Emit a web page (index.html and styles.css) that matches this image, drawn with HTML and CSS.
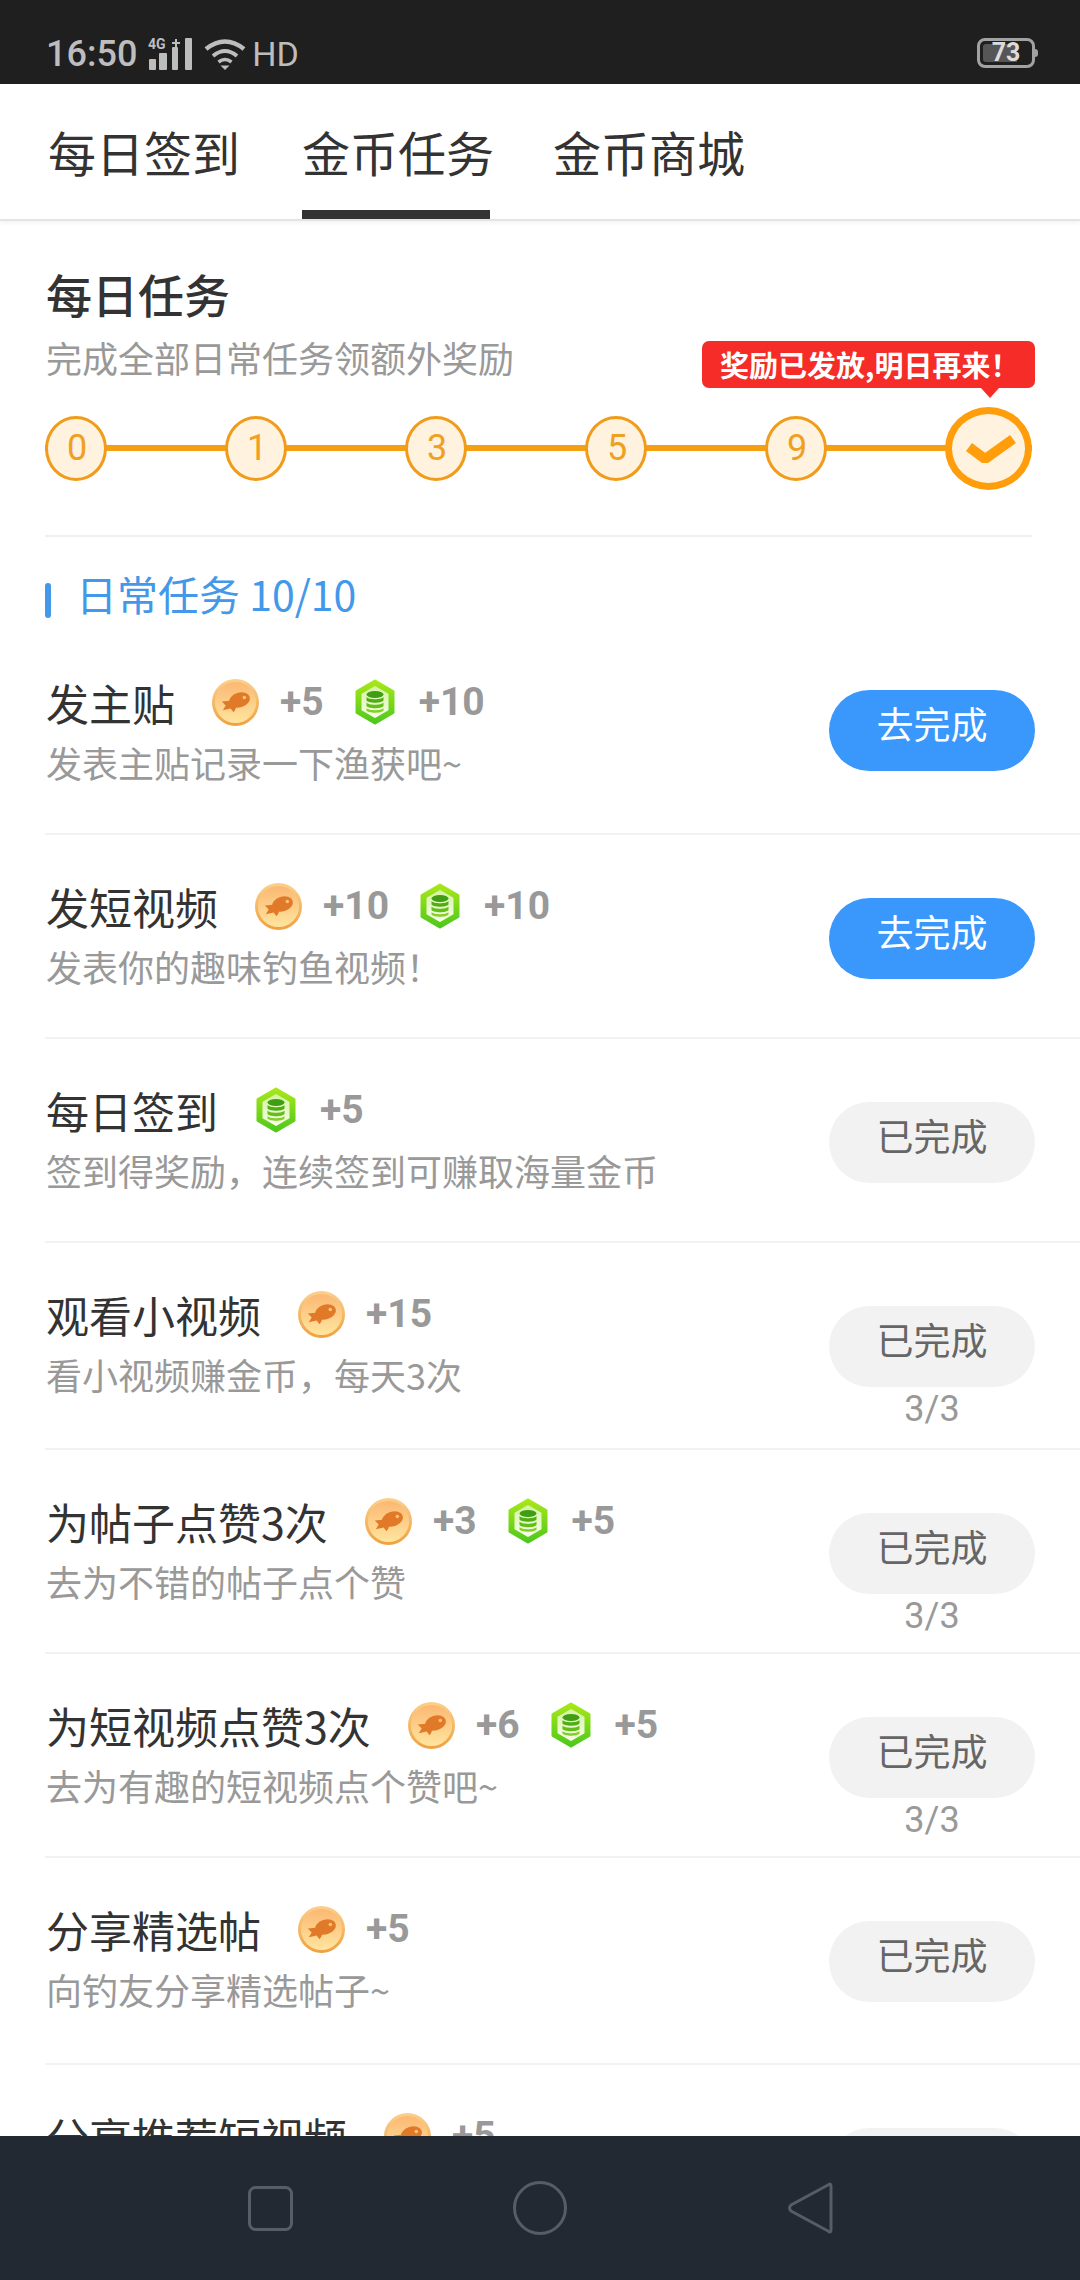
FILE: index.html
```html
<!DOCTYPE html>
<html lang="zh-CN">
<head>
    <meta charset="UTF-8">
    <title>金币任务</title>
    <link rel="stylesheet" href="styles.css">
</head>
<body>
    <svg class="defs" width="0" height="0">
        <defs>
            <linearGradient id="coin-fill" x1="0" y1="0" x2="0" y2="1">
                <stop offset="0" stop-color="#fbb873"/>
                <stop offset="1" stop-color="#ffe59e"/>
            </linearGradient>
            <linearGradient id="coin-ring" x1="0" y1="0" x2="0" y2="1">
                <stop offset="0" stop-color="#fbd08c"/>
                <stop offset="1" stop-color="#f0a040"/>
            </linearGradient>
            <linearGradient id="hex-fill" x1="0" y1="0" x2="0" y2="1">
                <stop offset="0" stop-color="#a8e818"/>
                <stop offset="1" stop-color="#4ec81c"/>
            </linearGradient>
            <linearGradient id="hex-inner" x1="0" y1="0" x2="0" y2="1">
                <stop offset="0" stop-color="#d6f3a4"/>
                <stop offset="1" stop-color="#f6fdea"/>
            </linearGradient>
            <symbol id="coin" viewBox="0 0 48 48">
                <circle cx="24" cy="24" r="24" fill="url(#coin-ring)"/>
                <circle cx="24" cy="24" r="21" fill="url(#coin-fill)"/>
                <ellipse cx="28" cy="21.500" rx="11" ry="7.500" transform="rotate(-18 28 21.500)" fill="#e07a28"/>
                <path d="M21 22l-11 1 4 4-3 5 8-2 3 4 2-3 2-7z" fill="#e07a28"/>
                <circle cx="33" cy="19" r="1.800" fill="#fbc27c"/>
            </symbol>
            <symbol id="hex" viewBox="0 0 42 46">
                <path d="M21 2l18 10.500v21L21 44 3 33.500v-21z" fill="url(#hex-fill)" stroke="url(#hex-fill)" stroke-width="3" stroke-linejoin="round"/>
                <path d="M21 8l12.500 7.300v15.400L21 38 8.500 30.700V15.300z" fill="url(#hex-inner)" stroke="url(#hex-inner)" stroke-width="2" stroke-linejoin="round"/>
                <ellipse cx="21" cy="15.500" rx="8.500" ry="3.500" fill="#3f9e12"/>
                <path d="M12.500 18c2 3 15 3 17 0v3.500c-2 3-15 3-17 0z" fill="#4fae14"/>
                <path d="M12.500 23.500c2 3 15 3 17 0V27c-2 3-15 3-17 0z" fill="#62be18"/>
                <path d="M12.500 29c2 3 15 3 17 0v2.500c-2 3-15 3-17 0z" fill="#82d022"/>
            </symbol>
        </defs>
    </svg>

    <header class="status-bar">
        <div class="status-left">
            <span class="clock">16:50</span>
            <svg class="signal" width="45" height="32" viewBox="0 0 45 32">
                <text x="0" y="11" class="net">4G</text>
                <path d="M24 4h3V1h2v3h3v2h-3v4h-2V6h-3z" fill="#bdbdbd"/>
                <rect x="1" y="21" width="7" height="11" rx="1" fill="#bdbdbd"/>
                <rect x="11" y="15" width="8" height="17" rx="1" fill="#bdbdbd"/>
                <rect x="24" y="9" width="6" height="23" rx="1" fill="#bdbdbd"/>
                <rect x="37" y="0" width="7" height="32" rx="1" fill="#bdbdbd"/>
            </svg>
            <svg class="wifi" width="42" height="32" viewBox="0 0 42 32">
                <path d="M2 11Q21 -4 40 11" fill="none" stroke="#bdbdbd" stroke-width="4.500"/>
                <path d="M9 18Q21 8 33 18" fill="none" stroke="#bdbdbd" stroke-width="4"/>
                <path d="M14.500 24Q21 19 27.500 24" fill="none" stroke="#bdbdbd" stroke-width="3.500"/>
                <path d="M16.500 27.500h9L21 32z" fill="#bdbdbd"/>
            </svg>
            <span class="hd">HD</span>
        </div>
        <div class="battery"><span class="battery-level">73</span></div>
    </header>

    <nav class="tabs">
        <a class="tab">每日签到</a>
        <a class="tab tab-active">金币任务</a>
        <a class="tab">金币商城</a>
    </nav>

    <main class="content">
        <section class="daily">
            <h1 class="daily-title">每日任务</h1>
            <p class="daily-sub">完成全部日常任务领额外奖励</p>
            <div class="steps">
                <span class="step">0</span>
                <span class="step">1</span>
                <span class="step">3</span>
                <span class="step">5</span>
                <span class="step">9</span>
                <span class="step step-done">
                    <span class="tip">奖励已发放,明日再来！</span>
                    <svg width="54" height="30" viewBox="0 0 54 30">
                        <path d="M7 14l16 12L51 6" fill="none" stroke="#ff9d0a" stroke-width="10" stroke-linejoin="round"/>
                    </svg>
                </span>
            </div>
        </section>

        <h2 class="group-title">日常任务 10/10</h2>

        <ul class="tasks">
            <li class="task">
                <div class="task-info">
                    <div class="task-head">
                        <span class="task-name">发主贴</span>
                        <svg class="coin"><use href="#coin"/></svg><b class="reward">+5</b>
                        <svg class="hex"><use href="#hex"/></svg><b class="reward">+10</b>
                    </div>
                    <p class="task-desc">发表主贴记录一下渔获吧~</p>
                </div>
                <div class="task-side"><span class="btn btn-go">去完成</span></div>
            </li>
            <li class="task">
                <div class="task-info">
                    <div class="task-head">
                        <span class="task-name">发短视频</span>
                        <svg class="coin"><use href="#coin"/></svg><b class="reward">+10</b>
                        <svg class="hex"><use href="#hex"/></svg><b class="reward">+10</b>
                    </div>
                    <p class="task-desc">发表你的趣味钓鱼视频！</p>
                </div>
                <div class="task-side"><span class="btn btn-go">去完成</span></div>
            </li>
            <li class="task">
                <div class="task-info">
                    <div class="task-head">
                        <span class="task-name">每日签到</span>
                        <svg class="hex"><use href="#hex"/></svg><b class="reward">+5</b>
                    </div>
                    <p class="task-desc">签到得奖励，连续签到可赚取海量金币</p>
                </div>
                <div class="task-side"><span class="btn">已完成</span></div>
            </li>
            <li class="task task-tall">
                <div class="task-info">
                    <div class="task-head">
                        <span class="task-name">观看小视频</span>
                        <svg class="coin"><use href="#coin"/></svg><b class="reward">+15</b>
                    </div>
                    <p class="task-desc">看小视频赚金币，每天3次</p>
                </div>
                <div class="task-side"><span class="btn">已完成</span><span class="count">3/3</span></div>
            </li>
            <li class="task">
                <div class="task-info">
                    <div class="task-head">
                        <span class="task-name">为帖子点赞3次</span>
                        <svg class="coin"><use href="#coin"/></svg><b class="reward">+3</b>
                        <svg class="hex"><use href="#hex"/></svg><b class="reward">+5</b>
                    </div>
                    <p class="task-desc">去为不错的帖子点个赞</p>
                </div>
                <div class="task-side"><span class="btn">已完成</span><span class="count">3/3</span></div>
            </li>
            <li class="task">
                <div class="task-info">
                    <div class="task-head">
                        <span class="task-name">为短视频点赞3次</span>
                        <svg class="coin"><use href="#coin"/></svg><b class="reward">+6</b>
                        <svg class="hex"><use href="#hex"/></svg><b class="reward">+5</b>
                    </div>
                    <p class="task-desc">去为有趣的短视频点个赞吧~</p>
                </div>
                <div class="task-side"><span class="btn">已完成</span><span class="count">3/3</span></div>
            </li>
            <li class="task task-tall">
                <div class="task-info">
                    <div class="task-head">
                        <span class="task-name">分享精选帖</span>
                        <svg class="coin"><use href="#coin"/></svg><b class="reward">+5</b>
                    </div>
                    <p class="task-desc">向钓友分享精选帖子~</p>
                </div>
                <div class="task-side"><span class="btn">已完成</span></div>
            </li>
            <li class="task">
                <div class="task-info">
                    <div class="task-head">
                        <span class="task-name">分享推荐短视频</span>
                        <svg class="coin"><use href="#coin"/></svg><b class="reward">+5</b>
                    </div>
                </div>
                <div class="task-side"><span class="btn">已完成</span></div>
            </li>
        </ul>
    </main>

    <footer class="nav-bar">
        <svg width="45" height="45" viewBox="0 0 45 45">
            <rect x="1.500" y="1.500" width="42" height="42" rx="6" fill="none" stroke="#565d68" stroke-width="3"/>
        </svg>
        <svg width="54" height="54" viewBox="0 0 54 54">
            <circle cx="27" cy="27" r="25.500" fill="none" stroke="#565d68" stroke-width="3"/>
        </svg>
        <svg width="46" height="52" viewBox="0 0 46 52">
            <path d="M41 3c2-2 3-1 3 1v44c0 2-1 3-3 1L4 29c-2-2-2-4 0-6z" fill="none" stroke="#565d68" stroke-width="3" stroke-linejoin="round"/>
        </svg>
    </footer>
</body>
</html>
```

FILE: styles.css
```css
* {
    box-sizing: border-box;
}

html, body {
    margin: 0;
    padding: 0;
}

body {
    width: 1080px;
    height: 2280px;
    display: flex;
    flex-direction: column;
    overflow: hidden;
    background: #fff;
    color: #333;
    font-family: "Noto Sans CJK SC", Roboto, sans-serif;
}

.defs {
    position: absolute;
}

/* Status bar */
.status-bar {
    flex: 0 0 84px;
    display: flex;
    justify-content: space-between;
    align-items: flex-end;
    padding: 0 45px 9px 46px;
    background: #1f1f1f;
    color: #bdbdbd;
}

.status-left {
    display: flex;
    align-items: center;
}

.clock, .hd {
    font-family: Roboto, sans-serif;
    line-height: 42px;
}

.clock {
    font-size: 36px;
    font-weight: 500;
}

.hd {
    font-size: 34px;
}

.signal {
    margin: 0 11px 0 11px;
}

.wifi {
    margin-right: 6px;
}

.net {
    font-family: Roboto, sans-serif;
    font-size: 14px;
    font-weight: 700;
    fill: #bdbdbd;
}

.battery {
    position: relative;
    width: 58px;
    height: 30px;
    margin-bottom: 7px;
    border: 3px solid #a2a2a2;
    border-radius: 8px;
    padding: 3px;
    display: flex;
}

.battery::after {
    content: "";
    position: absolute;
    right: -6px;
    top: 8px;
    width: 3px;
    height: 8px;
    border-radius: 0 3px 3px 0;
    background: #a2a2a2;
}

.battery-level {
    flex: 1;
    background: linear-gradient(to right, #565656 73%, transparent 73%);
    border-radius: 3px;
    color: #dcdcdc;
    font-family: Roboto, sans-serif;
    font-size: 25px;
    font-weight: 700;
    line-height: 18px;
    text-align: center;
}

/* Tabs */
.tabs {
    flex: 0 0 137px;
    display: flex;
    gap: 66px;
    padding-left: 48px;
    background: #fff;
    border-bottom: 2px solid #e4e4e4;
    box-shadow: 0 2px 4px rgba(0, 0, 0, 0.05);
}

.tab {
    width: 188px;
    height: 135px;
    padding-top: 34px;
    font-size: 48px;
    line-height: 66px;
    white-space: nowrap;
    color: #333;
}

.tab-active {
    margin-right: -3px;
    border-bottom: 9px solid #333;
}

/* Daily progress */
.content {
    flex: 1;
    min-height: 0;
    overflow: hidden;
}

.daily {
    margin: 0 48px 0 45px;
    height: 316px;
    padding-top: 42px;
    border-bottom: 2px solid #f0f0f0;
}

.daily-title {
    margin: 0 0 0 1px;
    font-size: 46px;
    font-weight: 500;
    line-height: 60px;
    color: #333;
}

.daily-sub {
    margin: 9px 0 0 1px;
    font-size: 36px;
    line-height: 50px;
    color: #999;
}

.steps {
    display: flex;
    align-items: center;
    justify-content: space-between;
    margin-top: 22px;
    height: 88px;
    background: linear-gradient(#f5a012, #f5a012) center / 100% 6px no-repeat;
}

.step {
    position: relative;
    width: 62px;
    height: 65px;
    padding-left: 2px;
    display: flex;
    align-items: center;
    justify-content: center;
    border: 3px solid #f09c1a;
    border-radius: 50%;
    background: #fff2df;
    color: #f0a020;
    font-family: Roboto, sans-serif;
    font-size: 36px;
}

.step-done {
    flex: 0 0 87px;
    height: 83px;
    padding-left: 0;
    border: 7px solid #ff9d0a;
}

.tip {
    position: absolute;
    top: -73px;
    right: -10px;
    width: 333px;
    height: 47px;
    padding-left: 18px;
    border-radius: 7px;
    background: #f52c27;
    color: #fff;
    font-family: "Noto Sans CJK SC", sans-serif;
    font-size: 29px;
    font-weight: 700;
    line-height: 46px;
    white-space: nowrap;
}

.tip::after {
    content: "";
    position: absolute;
    right: 36px;
    bottom: -10px;
    border: 9px solid transparent;
    border-bottom: 0;
    border-top: 10px solid #f52c27;
}

/* Task list */
.group-title {
    position: relative;
    margin: 30px 0 12px;
    padding-left: 76px;
    font-size: 41px;
    font-weight: 400;
    line-height: 52px;
    color: #4398ea;
}

.group-title::before {
    content: "";
    position: absolute;
    left: 45px;
    top: 16px;
    width: 6px;
    height: 35px;
    border-radius: 3px;
    background: #4398ea;
}

.tasks {
    margin: 0 0 0 45px;
    padding: 0;
    list-style: none;
}

.task {
    display: flex;
    justify-content: space-between;
    height: 204px;
    padding-right: 45px;
    border-bottom: 2px solid #f2f2f2;
}

.task-tall {
    height: 207px;
}

.task-info {
    padding: 40px 0 0 1px;
}

.task-head {
    display: flex;
    align-items: center;
    height: 62px;
}

.task-name {
    font-size: 43px;
    line-height: 62px;
    margin-right: 37px;
    color: #333;
}

.coin {
    width: 47px;
    height: 47px;
    margin-right: 21px;
}

.hex {
    width: 42px;
    height: 46px;
    margin-right: 23px;
}

.reward {
    font-family: Roboto, sans-serif;
    font-size: 39px;
    font-weight: 700;
    color: #999;
    margin-right: 30px;
}

.task-desc {
    margin: 4px 0 0;
    font-size: 36px;
    line-height: 50px;
    color: #999;
}

.task-side {
    flex: 0 0 206px;
    padding-top: 63px;
    display: flex;
    flex-direction: column;
    align-items: center;
}

.task:first-child .task-side {
    padding-top: 59px;
}

.btn {
    width: 206px;
    height: 81px;
    flex: none;
    border-radius: 41px;
    background: #f2f2f2;
    color: #666;
    font-size: 37px;
    line-height: 66px;
    text-align: center;
}

.btn-go {
    background: #3a97fb;
    color: #fff;
}

.count {
    font-family: Roboto, sans-serif;
    font-size: 36px;
    line-height: 44px;
    color: #999;
}

/* Navigation bar */
.nav-bar {
    flex: 0 0 144px;
    display: grid;
    grid-template-columns: repeat(3, 270px);
    justify-content: center;
    justify-items: center;
    align-items: center;
    background: #222933;
}
```
